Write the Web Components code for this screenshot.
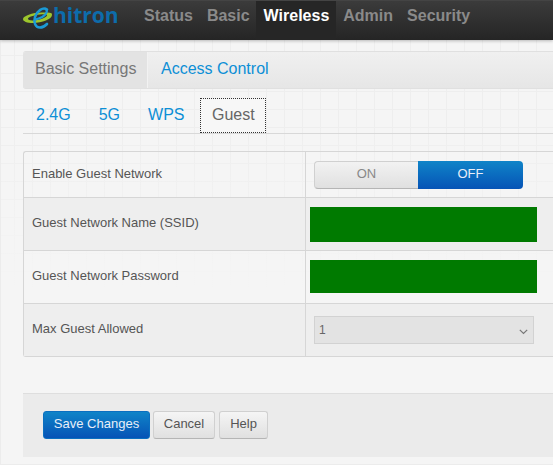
<!DOCTYPE html>
<html lang="en"><head><meta charset="utf-8"><title>hitron</title>
<style>
html,body{margin:0;padding:0;height:465px;overflow:hidden}
body{font-family:"Liberation Sans",Arial,sans-serif;color:#555;background-color:#f5f5f5;
background-image:linear-gradient(rgba(245,245,245,0) 120px,#f5f5f5 290px),linear-gradient(#eeeeee 1px,transparent 1px),linear-gradient(90deg,#eeeeee 1px,transparent 1px);background-size:auto,18px 18px,18px 18px;background-position:0 0,14px 1px,14px 1px;box-shadow:inset 0 -1px #ececec,inset 1px 0 #ececec}
</style></head><body>
<hn-header></hn-header>
<hn-page>
  <hn-subnav></hn-subnav>
  <hn-tabs></hn-tabs>
  <hn-table>
    <hn-row label="Enable Guest Network" h="45" lift="2"><hn-toggle></hn-toggle></hn-row>
    <hn-row label="Guest Network Name (SSID)" h="52" alt pad="4"><hn-mask h="35"></hn-mask></hn-row>
    <hn-row label="Guest Network Password" h="52" pad="4"><hn-mask h="33" up></hn-mask></hn-row>
    <hn-row label="Max Guest Allowed" h="52" alt last><hn-select></hn-select></hn-row>
  </hn-table>
</hn-page>
<hn-footer>
  <hn-btn primary w="107">Save Changes</hn-btn>
  <hn-btn w="62">Cancel</hn-btn>
  <hn-btn w="49">Help</hn-btn>
</hn-footer>
<script>
function def(name,css,html,init){
  customElements.define(name,class extends HTMLElement{
    constructor(){super();const s=this.attachShadow({mode:"open"});
      s.innerHTML="<style>"+css+"</style>"+html;}
    connectedCallback(){ if(init)init(this,this.shadowRoot); }
  });
}
def("hn-header",`
:host{display:flex;height:40px;box-sizing:border-box;background:linear-gradient(#3b3b3b,#252525);border-top:1px solid #444;box-shadow:0 1px 3px rgba(0,0,0,.25);font:bold 16px "Liberation Sans",sans-serif;color:#8a8a8a}
.logo{width:137px;flex:none;display:flex;align-items:flex-start;padding-left:22px;box-sizing:border-box;padding-top:3px}
.logo svg{display:block;flex:none;margin-top:-1px}
.logo span{font:bold 21px/23px "Open Sans",sans-serif;color:#0d6cab;margin-left:-2px}
nav{display:flex}
a{display:block;padding:5px 7px 0;height:34px;line-height:20px}
a.on{color:#fff;background:#262626;margin-left:-1px;padding-left:8px}
`,`<div class="logo"><svg width="33" height="28" viewBox="22 2 33 28">
<path fill-rule="evenodd" fill="#9dc62d" d="M23 18C23 15 32 11.500 42 11.500S52 12 52 14C52 18 42 22 33 22C27 22 23 20.500 23 18ZM28 17.800C28 19.200 31 19.800 35 19.300C41 18.600 47 16 47 14.200C47 13.300 44 13 40 13.500C34 14.200 28 16 28 17.800Z"/>
<path fill="none" stroke="#1b9ad6" stroke-width="2.600" stroke-linecap="round" d="M47 8.500C43 5.500 37 10 35 16C33.500 21 35 26.500 40 26.500C43 26.500 45 25 47 23"/>
<path fill="none" stroke="#1b9ad6" stroke-width="2.200" stroke-linecap="round" d="M35.500 18.500C40 17.500 45 14.500 46.500 11.500C47.200 9.800 46.500 8.500 45.500 8"/>
</svg><span>hitron</span></div>
<nav><a>Status</a><a>Basic</a><a class="on">Wireless</a><a>Admin</a><a>Security</a></nav>`);
def("hn-page",`:host{display:block;padding:11px 0 0 23px;height:353px;box-sizing:border-box}`,`<slot></slot>`);
def("hn-subnav",`
:host{display:flex;height:38px;box-sizing:border-box;background:linear-gradient(#f0f0f0,#e6e6e6);border:solid #e0e0e0;border-width:1px 0;border-radius:3px 0 0 3px;font:16px/34px "Liberation Sans",sans-serif}
b{font-weight:400;width:125px;box-sizing:border-box;padding-left:12px;background:#e3e3e3;color:#777;border-right:1px solid #f2f2f2;border-radius:3px 0 0 3px}
a{color:#0d8fd6;padding-left:13px}
`,`<b>Basic Settings</b><a>Access Control</a>`);
def("hn-tabs",`
:host{display:flex;gap:2px;height:36px;margin-top:9px;box-sizing:border-box;border-bottom:1px solid #d8d8d8;font:16px/34px "Liberation Sans",sans-serif;color:#0d8fd6}
a{display:block;padding:0 13px;height:35px;box-sizing:border-box}
a.on{color:#666;background:#f7f7f7;outline:1px dotted #333;outline-offset:-1px;padding:0 11.500px;margin-left:1px}
`,`<a>2.4G</a><a>5G</a><a>WPS</a><a class="on">Guest</a>`);
def("hn-table",`
:host{display:block;margin-top:17px;border:solid #d6d6d6;border-width:1px 0 1px 1px;border-radius:3px 0 0 3px;font:13px "Liberation Sans",sans-serif;color:#555}
`,`<slot></slot>`);
def("hn-row",`
:host{display:grid;grid-template-columns:282px 1fr;box-sizing:border-box;border-bottom:1px solid #d6d6d6}
:host([last]){border-bottom:0}
:host([alt]){background:#eeeeee}
.l{box-sizing:border-box;padding:0 0 4px 8px;border-right:1px solid #d6d6d6;display:flex;align-items:center}
.v{display:flex;align-items:center;min-width:0}
`,`<div class="l"></div><div class="v"><slot></slot></div>`,(el,s)=>{
  const l=s.querySelector(".l");
  l.textContent=el.getAttribute("label");
  if(el.hasAttribute("lift"))l.style.paddingBottom=el.getAttribute("lift")+"px";
  const h=+el.getAttribute("h"); el.style.height=(h+(el.hasAttribute("last")?0:1))+"px";
  s.querySelector(".v").style.paddingLeft=(el.getAttribute("pad")||"8")+"px";
});
def("hn-toggle",`
:host{display:flex;width:209px;height:28px;box-sizing:border-box;font:13px/24px "Liberation Sans",sans-serif;text-align:center}
span{display:block;box-sizing:border-box;height:28px}
.a{width:104px;background:linear-gradient(#f2f2f2,#e0e0e0);border:1px solid #d0d0d0;border-right:0;border-bottom-color:#b5b5b5;border-radius:4px 0 0 4px;color:#888}
.b{width:105px;background:linear-gradient(#0f84c8,#0653b6);border-radius:0 4px 4px 0;color:#e8eef8;line-height:25px}
`,`<span class="a">ON</span><span class="b">OFF</span>`);
def("hn-mask",`:host{display:block;width:227px;background:#007a00}:host([up]){margin-bottom:1px}`,``,(el)=>{el.style.height=el.getAttribute("h")+"px"});
def("hn-select",`
:host{display:flex;align-items:center;justify-content:space-between;width:220px;height:28px;box-sizing:border-box;background:#e3e3e3;border:1px solid #d2d2d2;font:12px "Liberation Sans",sans-serif;color:#666;padding:0 5px 0 4px}
svg{display:block;margin-top:3px}
`,`<span>1</span><svg width="9" height="6" viewBox="0 0 9 6"><path d="M.8.8 4.500 4.500 8.200.8" fill="none" stroke="#777" stroke-width="1.200"/></svg>`);
def("hn-footer",`
:host{display:flex;align-items:flex-start;margin-left:23px;height:64px;box-sizing:border-box;padding:17px 0 0 20px;background:#ebebeb;border-top:1px solid #dedede;gap:3px}
::slotted(hn-btn:last-child){margin-left:1px}
`,`<slot></slot>`);
def("hn-btn",`
:host{display:block;height:28px;box-sizing:border-box;border-radius:3px;font:13px/24px "Liberation Sans",sans-serif;text-align:center;background:linear-gradient(#f5f5f5,#e0e0e0);border:1px solid #d0d0d0;border-bottom-color:#b5b5b5;color:#555}
:host([primary]){background:linear-gradient(#0f84c8,#0653b6);border-color:#0b6fc0;color:#e8eef8}
`,`<slot></slot>`,(el)=>{el.style.width=el.getAttribute("w")+"px"});
</script>
</body></html>
